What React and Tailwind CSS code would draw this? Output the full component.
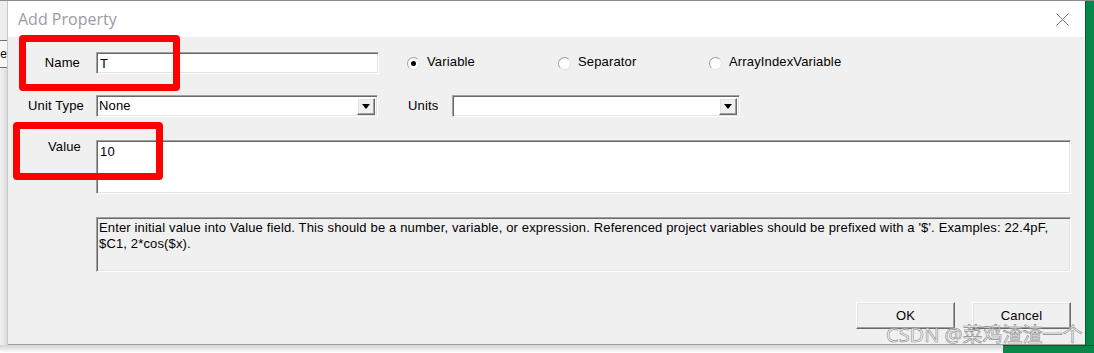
import React, { useState } from 'react';

const sunken =
  'border border-t-[#a0a0a0] border-l-[#a0a0a0] border-b-white border-r-white shadow-[inset_1px_1px_0_#696969,inset_-1px_-1px_0_#e3e3e3]';
const raised =
  'border border-t-white border-l-white border-b-[#696969] border-r-[#696969] shadow-[inset_-1px_-1px_0_#a0a0a0,inset_1px_1px_0_#e3e3e3]';

const Radio = ({ label, checked, onSelect }) => (
  <button type="button" onClick={onSelect} className="w-[151px] flex items-center gap-[7px] text-left">
    <span className="w-[13px] h-[13px] rounded-full bg-white border border-t-[#a0a0a0] border-l-[#a0a0a0] border-b-[#e3e3e3] border-r-[#e3e3e3] flex items-center justify-center">
      {checked && <span className="w-[5px] h-[5px] rounded-full bg-black" />}
    </span>
    <span className="-mt-[2px]">{label}</span>
  </button>
);

const Combo = ({ width, value }) => (
  <div className={`${width} h-[22px] bg-white ${sunken} flex items-center justify-between pl-[2px] pr-[2px]`}>
    <span>{value}</span>
    <span className={`w-[18px] h-[17px] bg-[#f0f0f0] ${raised} flex items-center justify-center`}>
      <svg width="8" height="5" viewBox="0 0 8 5">
        <path d="M0 0h8L4 5z" fill="#000" />
      </svg>
    </span>
  </div>
);

const Label = ({ children, className = '' }) => (
  <div className={`w-[88px] shrink-0 text-right ${className}`}>{children}</div>
);

const App = () => {
  const [kind, setKind] = useState('Variable');
  const [name, setName] = useState('T');
  const [value, setValue] = useState('10');

  return (
    <div className="w-[1094px] h-[353px] overflow-hidden bg-white flex flex-col relative font-['Liberation_Sans',Arial,sans-serif] text-[13px] tracking-[0.15px] text-black">
      <div className="h-px bg-[#8c8c8c] shrink-0" />
      <div className="flex h-[344px] shrink-0">
        <div className="w-[8px] bg-[#ededed] border-r border-[#c8c8c8] flex flex-col">
          <div className="h-[39px]" />
          <div className="h-[28px] bg-[#f7f7f7] border-y border-[#707070] overflow-hidden flex items-center justify-end text-[12px] leading-none">
            <span className="whitespace-nowrap">ne</span>
          </div>
          <div className="flex-1 bg-gradient-to-r from-[#f2f2f2] to-[#dcdcdc]" />
        </div>

        <div className="w-[1077px] border-b border-[#a0a0a0] flex flex-col">
          <div className="h-[36px] bg-white flex items-center justify-between pl-[10px] pr-[16px]">
            <span className="font-['Open_Sans',sans-serif] text-[16px] tracking-normal text-[#9b9ba6]">Add Property</span>
            <svg width="13" height="13" viewBox="0 0 13 13">
              <path d="M0.5 0.5L12.5 12.5M12.5 0.5L0.5 12.5" stroke="#777" strokeWidth="1" />
            </svg>
          </div>

          <div className="flex-1 bg-[#f0f0f0] pt-[15px] pr-[14px] flex flex-col">
            <div className="flex items-center h-[22px]">
              <Label className="pr-[16px]">Name</Label>
              <input
                value={name}
                onChange={(e) => setName(e.target.value)}
                className={`w-[283px] h-[22px] bg-white ${sunken} pl-[3px] outline-none`}
              />
              <div className="ml-[28px] flex">
                {['Variable', 'Separator', 'ArrayIndexVariable'].map((k) => (
                  <Radio key={k} label={k} checked={kind === k} onSelect={() => setKind(k)} />
                ))}
              </div>
            </div>

            <div className="flex items-center h-[22px] mt-[21px]">
              <Label className="pr-[12px]">Unit Type</Label>
              <Combo width="w-[282px]" value="None" />
              <div className="ml-[30px] w-[44px]">Units</div>
              <Combo width="w-[288px]" value="" />
            </div>

            <div className="flex mt-[23px]">
              <Label className="pr-[15px] leading-[14px]">Value</Label>
              <textarea
                value={value}
                onChange={(e) => setValue(e.target.value)}
                className={`flex-1 h-[54px] bg-white ${sunken} pl-[3px] pt-[1px] resize-none outline-none`}
              />
            </div>

            <div className="flex mt-[23px]">
              <Label />
              <div className={`flex-1 h-[55px] ${sunken} px-[2px] pt-[2px] leading-[16px]`}>
                Enter initial value into Value field. This should be a number, variable, or expression. Referenced project variables should be prefixed with a '$'. Examples: 22.4pF, $C1, 2*cos($x).
              </div>
            </div>

            <div className="flex justify-end gap-[17px] mt-[30px]">
              <button type="button" className={`w-[99px] h-[27px] bg-[#f0f0f0] ${raised}`}>OK</button>
              <button type="button" className={`w-[99px] h-[27px] bg-[#f0f0f0] ${raised}`}>Cancel</button>
            </div>
          </div>
        </div>

        <div className="flex-1 bg-[#07884a] border-l border-[#045c30]" />
      </div>

      <div className="flex flex-1">
        <div className="flex-1 bg-gradient-to-b from-[#d4d4d4] to-white" />
        <div className="w-[91px] bg-[#07884a] border-t border-[#7a2020]" />
      </div>

      <div className="absolute left-[19px] top-[35px] w-[161px] h-[56px] border-[7px] border-[#ff0000] rounded-[4px]" />
      <div className="absolute left-[13px] top-[122px] w-[150px] h-[58px] border-[7px] border-[#ff0000] rounded-[4px]" />

      <div className="absolute left-[886px] top-[325px] font-['Noto_Sans','Noto_Sans_CJK_SC',sans-serif] text-[20px] tracking-normal leading-none text-white/60 [-webkit-text-stroke:0.6px_#8a8a8a] whitespace-nowrap">
        CSDN @菜鸡渣渣一个
      </div>
    </div>
  );
};

export default App;
